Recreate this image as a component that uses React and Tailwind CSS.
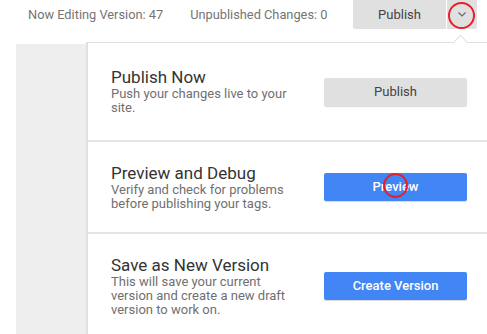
import React from "react";

const sections = [
  {
    title: "Publish Now",
    desc: ["Push your changes live to your", "site."],
    button: "Publish",
    primary: false,
    h: "h-[97px]",
  },
  {
    title: "Preview and Debug",
    desc: ["Verify and check for problems", "before publishing your tags."],
    button: "Preview",
    primary: true,
    h: "h-[92px]",
  },
  {
    title: "Save as New Version",
    desc: ["This will save your current", "version and create a new draft", "version to work on."],
    button: "Create Version",
    primary: true,
    h: "h-[106px]",
  },
];

export default function App() {
  return (
    <div className="relative w-[487px] h-[334px] overflow-hidden bg-white font-['Roboto',sans-serif]">
      {/* Top bar */}
      <div className="flex items-start h-[42px]">
        <div className="flex items-center shrink-0 w-[353px] h-[29px] pl-[28px] text-[12.8px] text-[#757575] whitespace-nowrap">
          <span>Now Editing Version: 47</span>
          <span className="ml-[27px]">Unpublished Changes: 0</span>
        </div>
        <div className="flex shrink-0 h-[29px]">
          <button className="w-[93px] h-[29px] bg-[#e0e0e0] text-[13px] text-[#444] rounded-bl-[2px]">
            Publish
          </button>
          <button className="ml-px w-[30px] h-[29px] bg-[#e0e0e0] flex items-center justify-center rounded-br-[2px]">
            <svg width="8" height="5" viewBox="0 0 8 5" fill="none">
              <polyline points="0.5,0.5 4,4 7.5,0.5" stroke="#666" strokeWidth="1.1" />
            </svg>
          </button>
        </div>
      </div>

      {/* Body */}
      <div className="flex pl-[16px]">
        <div className="shrink-0 w-[70px] h-[300px] mt-[2px] bg-[#eeeeee]" />
        <div className="relative shrink-0 w-[420px] bg-white border-t border-l-2 border-[#e0e0e0]">
          <div className="absolute -top-[6px] left-[367px] w-[11px] h-[11px] rotate-45 bg-white border-l border-t border-[#e0e0e0]" />
          {sections.map((s, i) => (
            <div
              key={s.title}
              className={`${s.h} flex items-center pl-[23px] ${i > 0 ? "border-t-2 border-[#e4e4e4]" : ""}`}
            >
              <div className="w-[213px] shrink-0">
                <div className="text-[17px] leading-[19px] text-[#333]">{s.title}</div>
                {s.desc.map((d) => (
                  <div key={d} className="text-[13px] leading-[14px] text-[#707070] whitespace-nowrap">
                    {d}
                  </div>
                ))}
              </div>
              <button
                className={`shrink-0 w-[143px] h-[28px] rounded-[2px] text-[13px] shadow-[0_1px_1px_rgba(0,0,0,0.15)] ${
                  s.primary ? "bg-[#4285f4] text-white font-medium" : "bg-[#e0e0e0] text-[#444]"
                }`}
              >
                {s.button}
              </button>
            </div>
          ))}
        </div>
      </div>

      {/* Red annotation circles */}
      <div className="absolute left-[448px] top-[2px] w-[27px] h-[27px] rounded-full border-2 border-[#e5202a]" />
      <div className="absolute left-[383px] top-[173px] w-[25px] h-[25px] rounded-full border-2 border-[#e5202a]" />
    </div>
  );
}
